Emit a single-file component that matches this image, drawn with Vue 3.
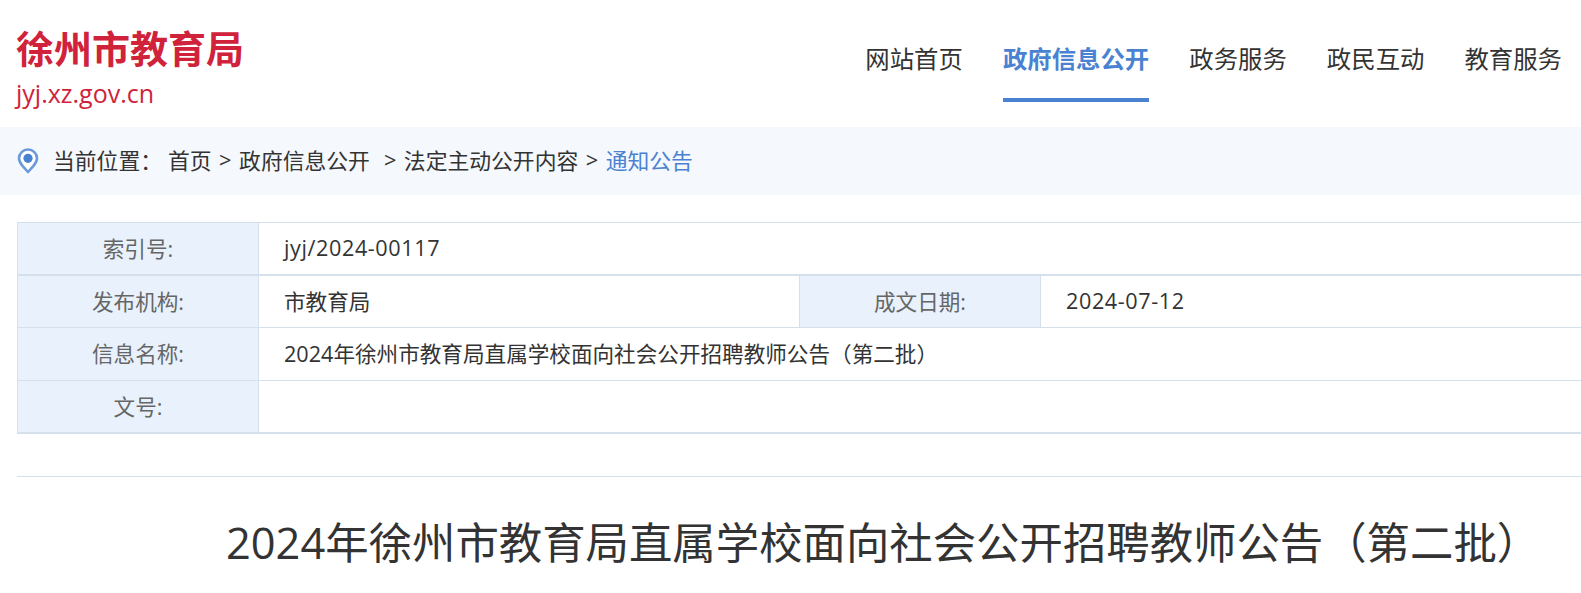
<template>
  <div class="page">
    <header class="header">
      <div class="brand">
        <h1>徐州市教育局</h1>
        <p>jyj.xz.gov.cn</p>
      </div>
      <nav class="nav">
        <a v-for="item in navItems" :key="item" :class="{ active: item === activeNav }">{{ item }}</a>
      </nav>
    </header>

    <div class="crumbs">
      <svg class="pin" width="22" height="26" viewBox="0 0 22 26">
        <path d="M11 1.500C6 1.500 2 5.400 2 10.300c0 3 1.500 5.300 3.500 7.500L11 24l5.500-6.200c2-2.200 3.500-4.500 3.500-7.500 0-4.900-4-8.800-9-8.800z" fill="#fff" stroke="#6a9ad9" stroke-width="2.600" stroke-linejoin="round" />
        <circle cx="11" cy="10.300" r="4.600" fill="#4a82d2" />
      </svg>
      <span class="here">当前位置：</span>
      <a>首页</a><i>&gt;</i><a>政府信息公开</a><i class="wide">&gt;</i><a>法定主动公开内容</a><i>&gt;</i><a class="current">通知公告</a>
    </div>

    <div class="meta">
      <div class="row first">
        <div class="label">索引号:</div>
        <div class="value latin">jyj/2024-00117</div>
      </div>
      <div class="row thick">
        <div class="label">发布机构:</div>
        <div class="value half">市教育局</div>
        <div class="label second">成文日期:</div>
        <div class="value latin">2024-07-12</div>
      </div>
      <div class="row">
        <div class="label">信息名称:</div>
        <div class="value">2024年徐州市教育局直属学校面向社会公开招聘教师公告（第二批）</div>
      </div>
      <div class="row last">
        <div class="label">文号:</div>
        <div class="value"></div>
      </div>
    </div>

    <div class="divider"></div>

    <h2 class="title">2024年徐州市教育局直属学校面向社会公开招聘教师公告（第二批）</h2>
  </div>
</template>

<script setup>
const navItems = ['网站首页', '政府信息公开', '政务服务', '政民互动', '教育服务']
const activeNav = '政府信息公开'
</script>

<style>
html,
body {
  overflow: hidden;
  background: #fff;
}
</style>

<style scoped>
.page {
  width: 1581px;
  height: 593px;
  overflow: hidden;
  font-family: "Open Sans", "Noto Sans CJK SC", sans-serif;
  color: #333;
}
.header {
  display: flex;
  justify-content: space-between;
  height: 127px;
  padding: 0 19px 0 16px;
  box-sizing: border-box;
}
.brand h1 {
  margin: 23px 0 0;
  font-size: 38px;
  line-height: 50px;
  font-weight: 700;
  color: #d0233b;
}
.brand p {
  margin: 4px 0 0;
  font-size: 25px;
  line-height: 32px;
  color: #d0233b;
}
.nav {
  display: flex;
  gap: 40px;
  align-items: flex-start;
}
.nav a {
  height: 102px;
  box-sizing: border-box;
  padding-top: 41px;
  font-size: 24.400px;
  line-height: 36px;
  color: #333;
}
.nav a.active {
  font-weight: 700;
  color: #4a82d2;
  border-bottom: 4px solid #4a82d2;
}
.crumbs {
  display: flex;
  align-items: center;
  height: 68px;
  padding: 0 0 4px 17px;
  box-sizing: border-box;
  background: #f5f8fd;
  font-size: 21.800px;
  color: #333;
}
.pin {
  margin: 4px 14px 0 0;
}
.here {
  margin-right: 6px;
}
.crumbs i {
  font-style: normal;
  margin: 0 7.500px;
}
.crumbs i.wide {
  margin-left: 14px;
}
.crumbs .current {
  color: #4a82d2;
}
.meta {
  margin: 27px 0 0 17px;
  width: 1564px;
  border-left: 1px solid #d5e0ec;
}
.row {
  display: flex;
  height: 53px;
  box-sizing: border-box;
  border-top: 1px solid #d5e0ec;
  font-size: 21.600px;
}
.row.first {
  height: 52px;
}
.row.thick {
  border-top-width: 2px;
}
.row.last {
  height: 54px;
  border-bottom: 2px solid #d5e0ec;
}
.label {
  flex: 0 0 241px;
  display: flex;
  align-items: center;
  justify-content: center;
  background: #e9f2fc;
  color: #666;
  border-right: 1px solid #d5e0ec;
  box-sizing: border-box;
  padding-bottom: 3px;
}
.label.second {
  flex-basis: 242px;
  border-left: 1px solid #d5e0ec;
}
.value {
  flex: 1;
  display: flex;
  align-items: center;
  padding-left: 25px;
  padding-bottom: 3px;
  color: #333;
}
.value.half {
  flex: 0 0 540px;
  box-sizing: border-box;
}
.value.latin {
  letter-spacing: 0.600px;
}
.divider {
  margin: 42px 0 0 17px;
  height: 1px;
  width: 1564px;
  background: #d5e0ec;
}
.title {
  margin: 34px 0 0 226px;
  font-size: 43.400px;
  line-height: 64px;
  font-weight: 400;
  color: #333;
  white-space: nowrap;
}
</style>
